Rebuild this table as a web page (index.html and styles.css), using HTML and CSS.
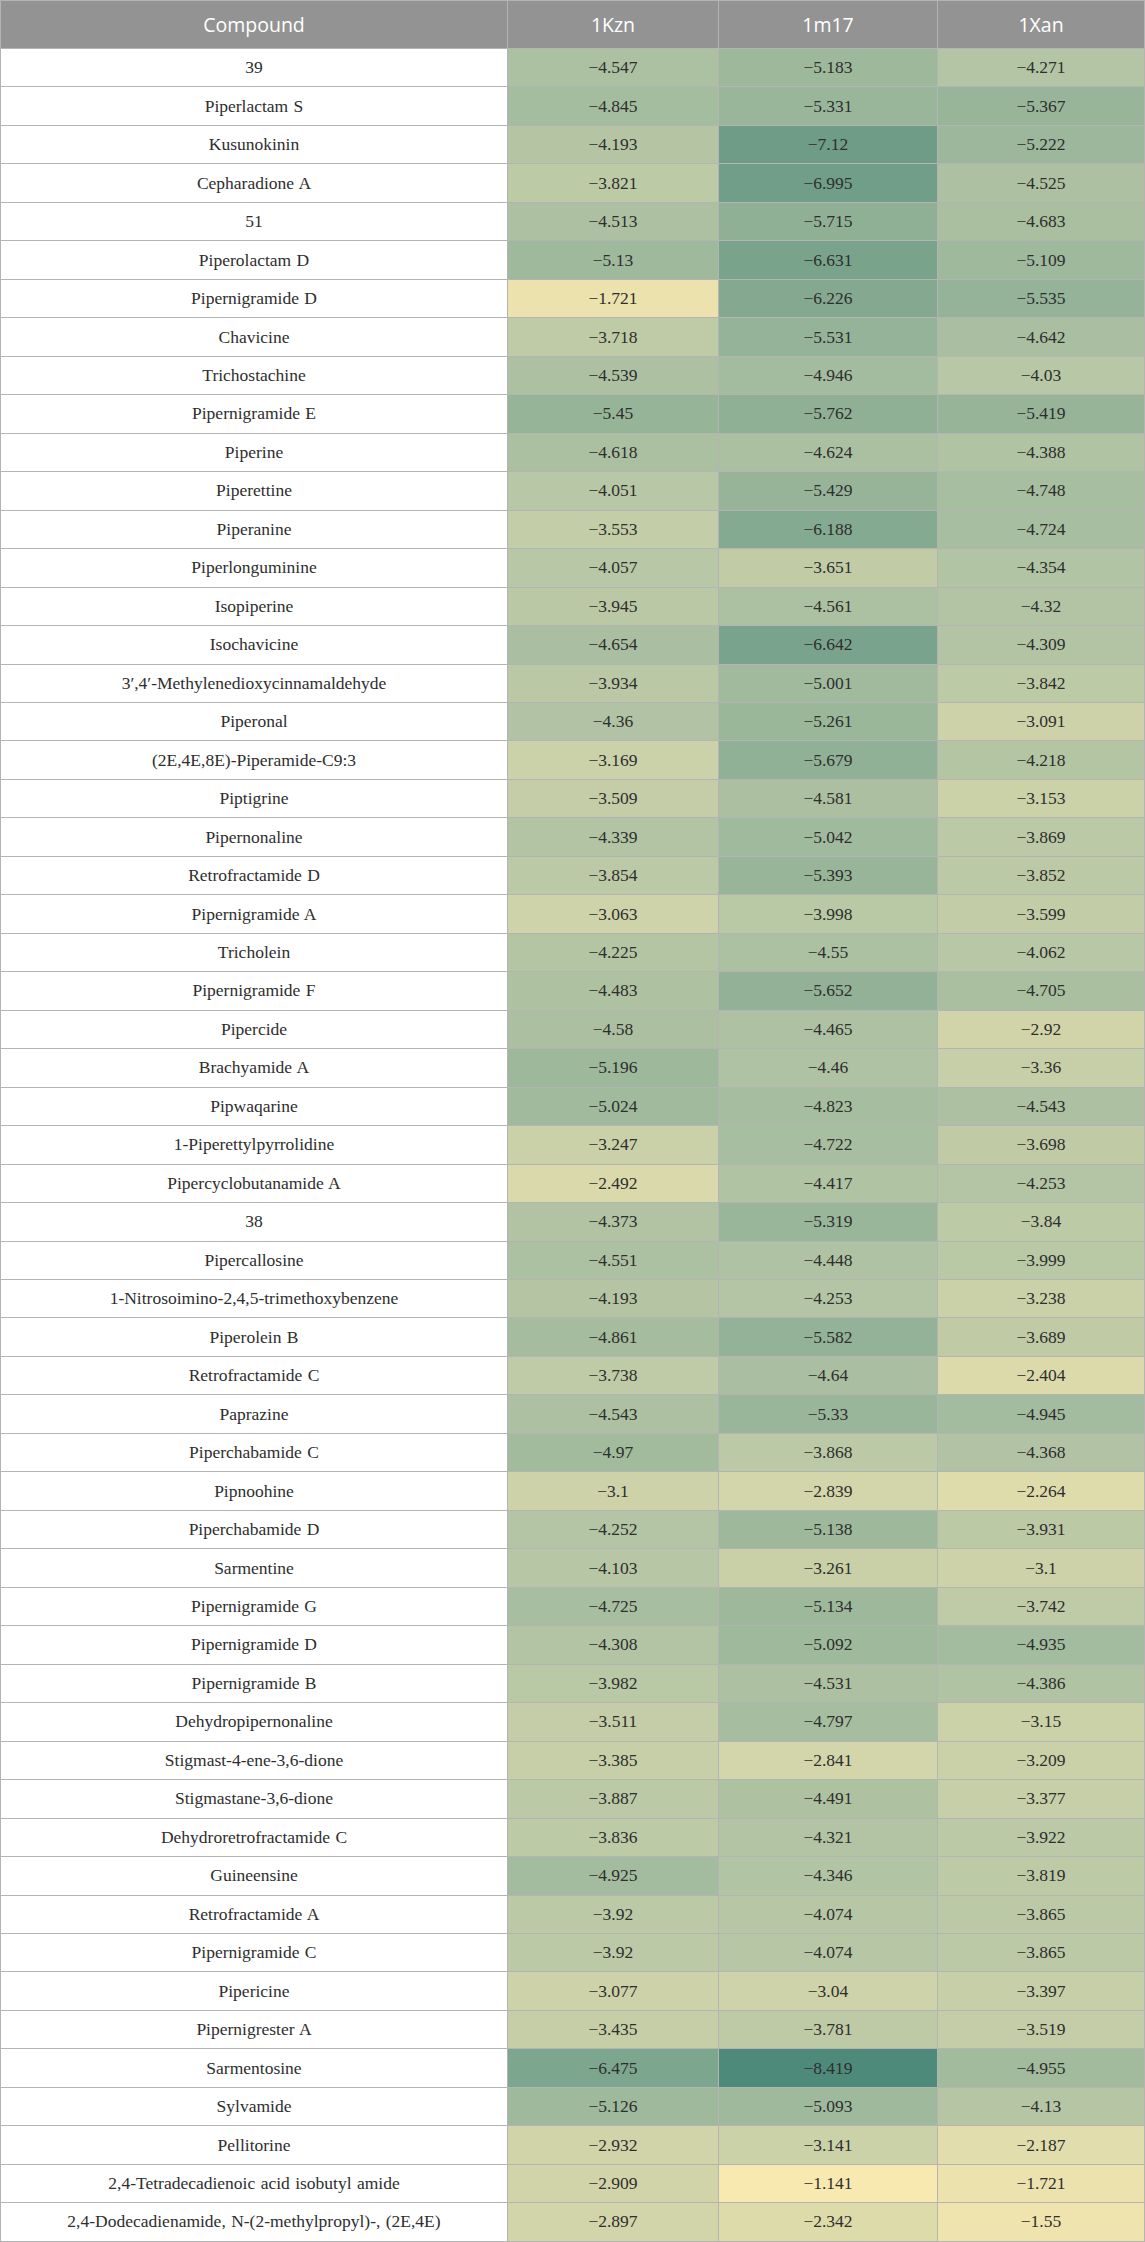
FILE: index.html
```html
<!DOCTYPE html>
<html lang="en">
<head>
<meta charset="utf-8">
<title>Docking scores</title>
<link rel="stylesheet" href="styles.css">
<script src="script.js" defer></script>
</head>
<body>
<table class="scores">
<colgroup><col class="c-name"><col class="c-a"><col class="c-b"><col class="c-c"></colgroup>
<thead>
<tr><th>Compound</th><th>1Kzn</th><th>1m17</th><th>1Xan</th></tr>
</thead>
<tbody>
<tr><td>39</td><td class="v">−4.547</td><td class="v">−5.183</td><td class="v">−4.271</td></tr>
<tr><td>Piperlactam S</td><td class="v">−4.845</td><td class="v">−5.331</td><td class="v">−5.367</td></tr>
<tr><td>Kusunokinin</td><td class="v">−4.193</td><td class="v">−7.12</td><td class="v">−5.222</td></tr>
<tr><td>Cepharadione A</td><td class="v">−3.821</td><td class="v">−6.995</td><td class="v">−4.525</td></tr>
<tr><td>51</td><td class="v">−4.513</td><td class="v">−5.715</td><td class="v">−4.683</td></tr>
<tr><td>Piperolactam D</td><td class="v">−5.13</td><td class="v">−6.631</td><td class="v">−5.109</td></tr>
<tr><td>Pipernigramide D</td><td class="v">−1.721</td><td class="v">−6.226</td><td class="v">−5.535</td></tr>
<tr><td>Chavicine</td><td class="v">−3.718</td><td class="v">−5.531</td><td class="v">−4.642</td></tr>
<tr><td>Trichostachine</td><td class="v">−4.539</td><td class="v">−4.946</td><td class="v">−4.03</td></tr>
<tr><td>Pipernigramide E</td><td class="v">−5.45</td><td class="v">−5.762</td><td class="v">−5.419</td></tr>
<tr><td>Piperine</td><td class="v">−4.618</td><td class="v">−4.624</td><td class="v">−4.388</td></tr>
<tr><td>Piperettine</td><td class="v">−4.051</td><td class="v">−5.429</td><td class="v">−4.748</td></tr>
<tr><td>Piperanine</td><td class="v">−3.553</td><td class="v">−6.188</td><td class="v">−4.724</td></tr>
<tr><td>Piperlonguminine</td><td class="v">−4.057</td><td class="v">−3.651</td><td class="v">−4.354</td></tr>
<tr><td>Isopiperine</td><td class="v">−3.945</td><td class="v">−4.561</td><td class="v">−4.32</td></tr>
<tr><td>Isochavicine</td><td class="v">−4.654</td><td class="v">−6.642</td><td class="v">−4.309</td></tr>
<tr><td>3′,4′-Methylenedioxycinnamaldehyde</td><td class="v">−3.934</td><td class="v">−5.001</td><td class="v">−3.842</td></tr>
<tr><td>Piperonal</td><td class="v">−4.36</td><td class="v">−5.261</td><td class="v">−3.091</td></tr>
<tr><td>(2E,4E,8E)-Piperamide-C9:3</td><td class="v">−3.169</td><td class="v">−5.679</td><td class="v">−4.218</td></tr>
<tr><td>Piptigrine</td><td class="v">−3.509</td><td class="v">−4.581</td><td class="v">−3.153</td></tr>
<tr><td>Pipernonaline</td><td class="v">−4.339</td><td class="v">−5.042</td><td class="v">−3.869</td></tr>
<tr><td>Retrofractamide D</td><td class="v">−3.854</td><td class="v">−5.393</td><td class="v">−3.852</td></tr>
<tr><td>Pipernigramide A</td><td class="v">−3.063</td><td class="v">−3.998</td><td class="v">−3.599</td></tr>
<tr><td>Tricholein</td><td class="v">−4.225</td><td class="v">−4.55</td><td class="v">−4.062</td></tr>
<tr><td>Pipernigramide F</td><td class="v">−4.483</td><td class="v">−5.652</td><td class="v">−4.705</td></tr>
<tr><td>Pipercide</td><td class="v">−4.58</td><td class="v">−4.465</td><td class="v">−2.92</td></tr>
<tr><td>Brachyamide A</td><td class="v">−5.196</td><td class="v">−4.46</td><td class="v">−3.36</td></tr>
<tr><td>Pipwaqarine</td><td class="v">−5.024</td><td class="v">−4.823</td><td class="v">−4.543</td></tr>
<tr><td>1-Piperettylpyrrolidine</td><td class="v">−3.247</td><td class="v">−4.722</td><td class="v">−3.698</td></tr>
<tr><td>Pipercyclobutanamide A</td><td class="v">−2.492</td><td class="v">−4.417</td><td class="v">−4.253</td></tr>
<tr><td>38</td><td class="v">−4.373</td><td class="v">−5.319</td><td class="v">−3.84</td></tr>
<tr><td>Pipercallosine</td><td class="v">−4.551</td><td class="v">−4.448</td><td class="v">−3.999</td></tr>
<tr><td>1-Nitrosoimino-2,4,5-trimethoxybenzene</td><td class="v">−4.193</td><td class="v">−4.253</td><td class="v">−3.238</td></tr>
<tr><td>Piperolein B</td><td class="v">−4.861</td><td class="v">−5.582</td><td class="v">−3.689</td></tr>
<tr><td>Retrofractamide C</td><td class="v">−3.738</td><td class="v">−4.64</td><td class="v">−2.404</td></tr>
<tr><td>Paprazine</td><td class="v">−4.543</td><td class="v">−5.33</td><td class="v">−4.945</td></tr>
<tr><td>Piperchabamide C</td><td class="v">−4.97</td><td class="v">−3.868</td><td class="v">−4.368</td></tr>
<tr><td>Pipnoohine</td><td class="v">−3.1</td><td class="v">−2.839</td><td class="v">−2.264</td></tr>
<tr><td>Piperchabamide D</td><td class="v">−4.252</td><td class="v">−5.138</td><td class="v">−3.931</td></tr>
<tr><td>Sarmentine</td><td class="v">−4.103</td><td class="v">−3.261</td><td class="v">−3.1</td></tr>
<tr><td>Pipernigramide G</td><td class="v">−4.725</td><td class="v">−5.134</td><td class="v">−3.742</td></tr>
<tr><td>Pipernigramide D</td><td class="v">−4.308</td><td class="v">−5.092</td><td class="v">−4.935</td></tr>
<tr><td>Pipernigramide B</td><td class="v">−3.982</td><td class="v">−4.531</td><td class="v">−4.386</td></tr>
<tr><td>Dehydropipernonaline</td><td class="v">−3.511</td><td class="v">−4.797</td><td class="v">−3.15</td></tr>
<tr><td>Stigmast-4-ene-3,6-dione</td><td class="v">−3.385</td><td class="v">−2.841</td><td class="v">−3.209</td></tr>
<tr><td>Stigmastane-3,6-dione</td><td class="v">−3.887</td><td class="v">−4.491</td><td class="v">−3.377</td></tr>
<tr><td>Dehydroretrofractamide C</td><td class="v">−3.836</td><td class="v">−4.321</td><td class="v">−3.922</td></tr>
<tr><td>Guineensine</td><td class="v">−4.925</td><td class="v">−4.346</td><td class="v">−3.819</td></tr>
<tr><td>Retrofractamide A</td><td class="v">−3.92</td><td class="v">−4.074</td><td class="v">−3.865</td></tr>
<tr><td>Pipernigramide C</td><td class="v">−3.92</td><td class="v">−4.074</td><td class="v">−3.865</td></tr>
<tr><td>Pipericine</td><td class="v">−3.077</td><td class="v">−3.04</td><td class="v">−3.397</td></tr>
<tr><td>Pipernigrester A</td><td class="v">−3.435</td><td class="v">−3.781</td><td class="v">−3.519</td></tr>
<tr><td>Sarmentosine</td><td class="v">−6.475</td><td class="v">−8.419</td><td class="v">−4.955</td></tr>
<tr><td>Sylvamide</td><td class="v">−5.126</td><td class="v">−5.093</td><td class="v">−4.13</td></tr>
<tr><td>Pellitorine</td><td class="v">−2.932</td><td class="v">−3.141</td><td class="v">−2.187</td></tr>
<tr><td>2,4-Tetradecadienoic acid isobutyl amide</td><td class="v">−2.909</td><td class="v">−1.141</td><td class="v">−1.721</td></tr>
<tr><td>2,4-Dodecadienamide, N-(2-methylpropyl)-, (2E,4E)</td><td class="v">−2.897</td><td class="v">−2.342</td><td class="v">−1.55</td></tr>
</tbody>
</table>
</body>
</html>
```

FILE: styles.css
```css
html, body {
  margin: 0;
  padding: 0;
  background: #ffffff;
}

.scores {
  width: 1145px;
  table-layout: fixed;
  border-collapse: separate;
  border-spacing: 1px;
  background: #b4b4b4;
}

.c-name { width: 506px; }
.c-a { width: 210px; }
.c-b { width: 218px; }
.c-c { width: 206px; }

.scores th {
  height: 47px;
  padding: 0;
  background: #939393;
  color: #ffffff;
  font-family: "Open Sans", "Noto Sans", sans-serif;
  font-weight: 400;
  font-size: 19.5px;
  text-align: center;
  vertical-align: middle;
}

.scores td {
  height: 37.47px;
  padding: 0;
  background: #ffffff;
  color: #2e2e2e;
  font-family: "Liberation Serif", "Times New Roman", serif;
  font-size: 17.5px;
  word-spacing: 1px;
  text-align: center;
  vertical-align: middle;
}
```

FILE: script.js
```js
(function () {
  var cells = Array.prototype.slice.call(document.querySelectorAll('.scores td.v'));
  var vals = cells.map(function (c) {
    return parseFloat(c.textContent.replace('\u2212', '-'));
  });
  var sorted = vals.slice().sort(function (a, b) { return a - b; });
  var min = sorted[0];
  var max = sorted[sorted.length - 1];
  var mid = sorted[Math.floor(sorted.length / 2)];
  var cMin = [78, 138, 122];
  var cMid = [178, 196, 164];
  var cMax = [248, 233, 176];
  function mix(a, b, t) {
    return [0, 1, 2].map(function (i) { return Math.round(a[i] + (b[i] - a[i]) * t); });
  }
  cells.forEach(function (cell, i) {
    var v = vals[i];
    var col;
    if (v <= mid) {
      col = mix(cMin, cMid, (v - min) / (mid - min));
    } else {
      col = mix(cMid, cMax, (v - mid) / (max - mid));
    }
    cell.style.backgroundColor = 'rgb(' + col.join(',') + ')';
  });
})();
```
